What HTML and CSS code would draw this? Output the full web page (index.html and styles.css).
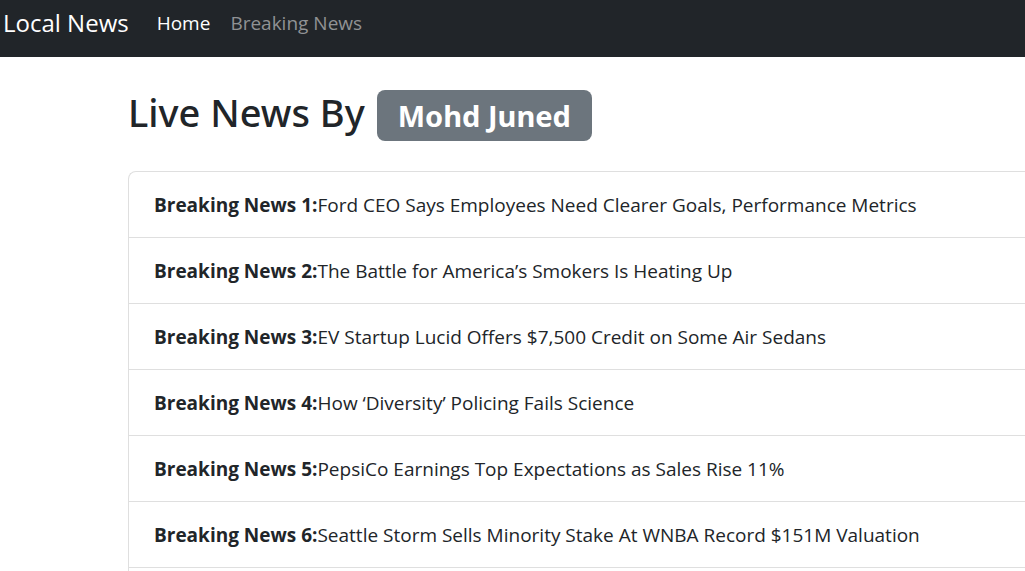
FILE: index.html
```html
<!DOCTYPE html>
<html lang="en">
<head>
<meta charset="utf-8">
<title>Local News</title>
<link rel="stylesheet" href="styles.css">
</head>
<body>
<nav class="navbar">
  <a class="brand" href="#">Local News</a>
  <a class="nav-link active" href="#">Home</a>
  <a class="nav-link" href="#">Breaking News</a>
</nav>
<main class="container">
  <h1 class="title">Live News By <span class="badge">Mohd Juned</span></h1>
  <ul class="news-list">
    <li class="news-item"><b>Breaking News 1:</b>Ford CEO Says Employees Need Clearer Goals, Performance Metrics</li>
    <li class="news-item"><b>Breaking News 2:</b>The Battle for America’s Smokers Is Heating Up</li>
    <li class="news-item"><b>Breaking News 3:</b>EV Startup Lucid Offers $7,500 Credit on Some Air Sedans</li>
    <li class="news-item"><b>Breaking News 4:</b>How ‘Diversity’ Policing Fails Science</li>
    <li class="news-item"><b>Breaking News 5:</b>PepsiCo Earnings Top Expectations as Sales Rise 11%</li>
    <li class="news-item"><b>Breaking News 6:</b>Seattle Storm Sells Minority Stake At WNBA Record $151M Valuation</li>
  </ul>
</main>
</body>
</html>
```
FILE: styles.css
```css
* { box-sizing: border-box; }
body {
  margin: 0;
  overflow: hidden;
  background: #fff;
  color: #212529;
  font-family: "Segoe UI", "Open Sans", "Noto Sans", sans-serif;
  font-size: 19px;
  line-height: 30px;
}
.navbar {
  display: flex;
  align-items: center;
  gap: 20px;
  padding: 8px 3px 19px;
  background: #212529;
}
.brand {
  margin-right: 8px;
  color: #fff;
  font-size: 24px;
  text-decoration: none;
}
.nav-link { color: #909294; text-decoration: none; }
.nav-link.active { color: #fff; }
.container { padding: 33px 0 0 128px; }
.title {
  display: flex;
  align-items: baseline;
  gap: 12px;
  margin: 0 0 30px;
  font-family: "Segoe UI", "Noto Sans", "Open Sans", sans-serif;
  font-size: 38px;
  font-weight: 500;
  line-height: 44px;
}
.badge {
  padding: 0 21px;
  border-radius: 8px;
  background: #6c757d;
  color: #fff;
  font-size: 29px;
  font-weight: 700;
  line-height: 51px;
}
.news-list {
  margin: 0;
  padding: 0 0 20px;
  border: 1px solid #dfdfdf;
  border-right: 0;
  border-radius: 8px 0 0 0;
  list-style: none;
}
.news-item {
  padding: 18px 25px 17px;
  border-bottom: 1px solid #dfdfdf;
}
```
